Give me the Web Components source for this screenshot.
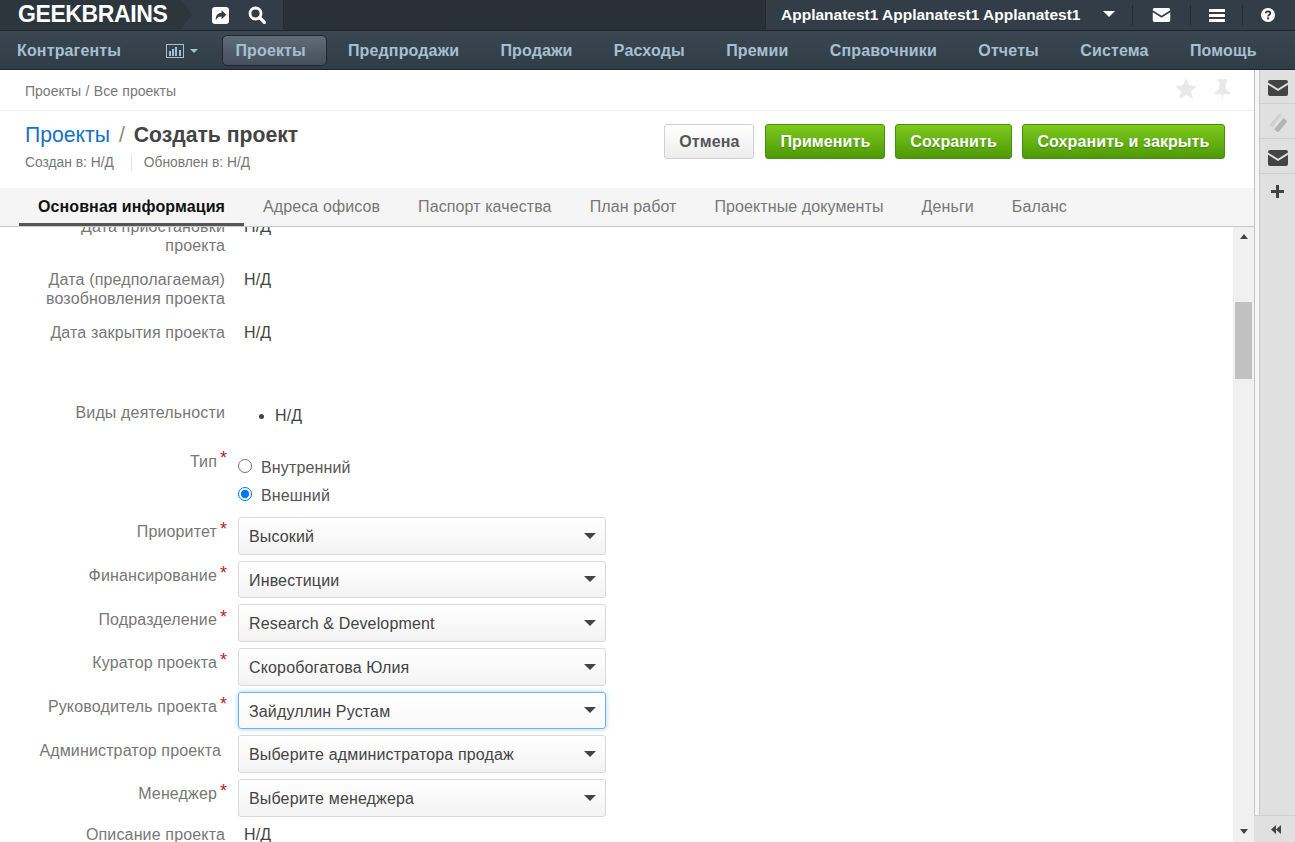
<!DOCTYPE html>
<html lang="ru">
<head>
<meta charset="utf-8">
<title>Создать проект</title>
<style>
  html, body { margin: 0; height: 100%; overflow: hidden; }
  body { font: 16px/20px "Liberation Sans", Arial, sans-serif; color: #444; background: #fff; }
  #app { display: flex; flex-direction: column; height: 842px; }
  #main { display: flex; flex: 1; min-height: 0; }
  #work { flex: 1; min-width: 0; display: flex; flex-direction: column; }
</style>
</head>
<body>
<div id="app">
  <gb-topbar></gb-topbar>
  <gb-navbar></gb-navbar>
  <div id="main">
    <div id="work">
      <gb-breadcrumbs></gb-breadcrumbs>
      <gb-titlebar></gb-titlebar>
      <gb-tabs></gb-tabs>
      <gb-scrollpane>
        <gb-field label="Дата приостановки проекта" style="margin-top:-12px;height:53px">Н/Д</gb-field>
        <gb-field label="Дата (предполагаемая) возобновления проекта" style="height:53px">Н/Д</gb-field>
        <gb-field label="Дата закрытия проекта" style="height:80px">Н/Д</gb-field>
        <gb-field label="Виды деятельности" list style="height:49px"><ul><li>Н/Д</li></ul></gb-field>
        <gb-field label="Тип" required radio style="height:66px">
          <gb-radio name="type" label="Внутренний"></gb-radio>
          <gb-radio name="type" label="Внешний" checked></gb-radio>
        </gb-field>
        <gb-field label="Приоритет" required select><gb-select value="Высокий"></gb-select></gb-field>
        <gb-field label="Финансирование" required select><gb-select value="Инвестиции"></gb-select></gb-field>
        <gb-field label="Подразделение" required select><gb-select value="Research &amp; Development"></gb-select></gb-field>
        <gb-field label="Куратор проекта" required select><gb-select value="Скоробогатова Юлия"></gb-select></gb-field>
        <gb-field label="Руководитель проекта" required select><gb-select value="Зайдуллин Рустам" focused></gb-select></gb-field>
        <gb-field label="Администратор проекта" optional select><gb-select value="Выберите администратора продаж"></gb-select></gb-field>
        <gb-field label="Менеджер" required select><gb-select value="Выберите менеджера"></gb-select></gb-field>
        <gb-field label="Описание проекта" style="padding-top:1px;height:40px">Н/Д</gb-field>
      </gb-scrollpane>
    </div>
    <gb-siderail></gb-siderail>
  </div>
</div>

<script>
const ICONS = {
  envelope: '<svg viewBox="0 0 20 16" width="W" height="H"><path fill="currentColor" d="M2 0h16a2 2 0 0 1 2 2v.6l-10 6.2L0 2.600V2a2 2 0 0 1 2-2zM0 4.800l10 6.200 10-6.200V14a2 2 0 0 1-2 2H2a2 2 0 0 1-2-2z"/></svg>',
  share: '<svg viewBox="0 0 16 16" width="17" height="17"><path fill="currentColor" fill-rule="evenodd" d="M3 0h10a3 3 0 0 1 3 3v10a3 3 0 0 1-3 3H3a3 3 0 0 1-3-3V3a3 3 0 0 1 3-3zM9 3v2.500C5.500 5.700 3.500 8 3.500 12.500 5 9.800 6.500 9 9 9v2.500L13.500 7.200z"/></svg>',
  search: '<svg viewBox="0 0 18 18" width="18" height="18"><circle cx="7.500" cy="7.500" r="5.500" fill="none" stroke="currentColor" stroke-width="2.800"/><path d="M11.500 11.500L16.500 16.500" stroke="currentColor" stroke-width="3.200" stroke-linecap="round"/></svg>',
  bars: '<svg viewBox="0 0 18 14" width="18" height="14"><path fill="currentColor" d="M0 0h18v14H0zM1 1v12h16V1z" fill-rule="evenodd"/><path fill="currentColor" d="M3 7h2v5H3zM6 5h2v7H6zM9 3h2v9H9zM13 6h2v6h-2z"/></svg>',
  hamburger: '<svg viewBox="0 0 16 13" width="16" height="13"><path fill="currentColor" d="M0 0h16v3H0zM0 5h16v3H0zM0 10h16v3H0z"/></svg>',
  help: '<svg viewBox="0 0 14 14" width="14" height="14"><circle cx="7" cy="7" r="7" fill="currentColor"/><path d="M4.700 5.300C4.800 4 5.800 3.300 7 3.300s2.300.8 2.300 1.900c0 1.600-2.200 1.700-2.200 3.200" fill="none" stroke="#2c343c" stroke-width="1.800"/><rect x="6.100" y="9.400" width="2" height="1.900" fill="#2c343c"/></svg>',
  star: '<svg viewBox="0 0 24 23" width="22" height="21"><path fill="currentColor" d="M12 0l3.500 8 8.500.8-6.400 5.700 1.900 8.500L12 18.500 4.500 23l1.900-8.500L0 8.800 8.500 8z"/></svg>',
  pin: '<svg viewBox="0 0 16 24" width="15" height="23" style="margin-top:1px"><path fill="currentColor" d="M3 0h10v2.500h-1.500V10L16 14v2H9l-1 8-1-8H0v-2l4.500-4V2.500H3z"/></svg>',
  stripes: '<svg viewBox="0 0 20 20" width="20" height="20"><path fill="#d0d0d0" d="M1.500 12.500L10.500 2a2 2 0 0 1 3 0l.5.500L4.500 15.500z"/><path fill="#b4b4b4" d="M6 17.500L15.500 6l3 2.500a1.500 1.500 0 0 1 0 2L11 19.500a1.500 1.500 0 0 1-2 0z"/></svg>',
  plus: '<svg viewBox="0 0 13 13" width="13" height="13"><path fill="currentColor" d="M5 0h3v5h5v3H8v5H5V8H0V5h5z"/></svg>',
  rewind: '<svg viewBox="0 0 10 9" width="10" height="9"><path fill="currentColor" d="M5 0v9L0 4.500zM10 0v9L5 4.500z"/></svg>'
};

function icon(name, w, h) {
  return ICONS[name].replace('"W"', '"' + w + '"').replace('"H"', '"' + h + '"');
}

class GbElement extends HTMLElement {
  connectedCallback() {
    if (this.shadowRoot) return;
    this.attachShadow({ mode: 'open' });
    this.render();
  }
}

class GbTopbar extends GbElement {
  render() {
    this.shadowRoot.innerHTML = `
      <style>
        :host { display: flex; height: 30px; background: #2a3038; border-bottom: 1px solid #1f252b; color: #fff; }
        .logo { width: 162px; padding-left: 18px; font: bold 23px/28px "Liberation Sans", sans-serif; letter-spacing: -.4px; background: #2d353d; white-space: nowrap; }
        .arrow { width: 0; height: 0; border-left: 12px solid #2d353d; border-top: 15px solid transparent; border-bottom: 15px solid transparent; background: #323d47; }
        .tools { display: flex; align-items: center; gap: 19px; width: 92px; background: #323d47; border-right: 1px solid #252b31; box-sizing: border-box; padding-left: 20px; }
        .tools svg { display: block; }
        .spacer { flex: 1; }
        .user { display: flex; align-items: center; height: 30px; width: 530px; background: #323d47; border-left: 1px solid #252b31; box-sizing: border-box; padding-left: 15px; }
        .name { font: bold 15.500px/20px "Liberation Sans", sans-serif; width: 322px; white-space: nowrap; }
        .caret { width: 0; height: 0; border: 6px solid transparent; border-top-color: #fff; border-bottom: 0; margin-top: -2px; }
        .sep { width: 1px; height: 20px; background: #232a30; }
        .cell { display: flex; align-items: center; justify-content: center; box-sizing: border-box; }
      </style>
      <div class="logo">GEEKBRAINS</div>
      <div class="arrow"></div>
      <div class="tools">${icon('share')}${icon('search')}</div>
      <div class="spacer"></div>
      <div class="user">
        <div class="name">Applanatest1 Applanatest1 Applanatest1</div>
        <div class="caret"></div>
        <div class="sep" style="margin-left:17px"></div>
        <div class="cell" style="width:57px">${icon('envelope', 19, 14)}</div>
        <div class="sep"></div>
        <div class="cell" style="width:51px">${icon('hamburger')}</div>
        <div class="sep"></div>
        <div class="cell" style="width:37px;padding-left:13px">${icon('help')}</div>
      </div>`;
  }
}

class GbNavbar extends GbElement {
  render() {
    const items = ['Предпродажи', 'Продажи', 'Расходы', 'Премии', 'Справочники', 'Отчеты', 'Система', 'Помощь'];
    this.shadowRoot.innerHTML = `
      <style>
        :host { display: flex; align-items: center; height: 39px; box-sizing: border-box; padding: 2px 0 0 17px; background: linear-gradient(#3a4752, #303c46); border-bottom: 1px solid #1f272d; color: #a6c0d2; font: bold 16px/20px "Liberation Sans", sans-serif; letter-spacing: .15px; }
        .item { margin-right: 41.300px; white-space: nowrap; }
        .chart { display: flex; align-items: center; gap: 6px; margin-left: 4px; margin-right: 24px; }
        .caret { width: 0; height: 0; border: 4px solid transparent; border-top-color: #a6c0d2; border-bottom: 0; }
        .active { margin: -2px 21px 0 0; padding: 0 20px 0 12px; height: 31px; line-height: 29px; border-radius: 5px; border: 1px solid #20282e; box-sizing: border-box; background: linear-gradient(#5f6c78, #454f5b); }
      </style>
      <div class="item">Контрагенты</div>
      <div class="item chart">${icon('bars')}<span class="caret"></span></div>
      <div class="item active">Проекты</div>
      ${items.map(t => `<div class="item">${t}</div>`).join('')}`;
  }
}

class GbBreadcrumbs extends GbElement {
  render() {
    this.shadowRoot.innerHTML = `
      <style>
        :host { display: flex; align-items: center; height: 41px; box-sizing: border-box; padding: 0 24px 0 25px; border-bottom: 1px solid #eee; color: #777; font: 14px/20px "Liberation Sans", sans-serif; }
        .crumbs { flex: 1; padding-top: 2px; word-spacing: .5px; }
        .tools { display: flex; align-items: flex-start; gap: 18px; height: 24px; color: #e9e9e9; }
        svg { display: block; }
      </style>
      <div class="crumbs">Проекты / Все проекты</div>
      <div class="tools">${icon('star')}${icon('pin')}</div>`;
  }
}

class GbTitlebar extends GbElement {
  render() {
    this.shadowRoot.innerHTML = `
      <style>
        :host { display: flex; height: 77px; box-sizing: border-box; padding: 12px 29px 0 25px; font-family: "Liberation Sans", sans-serif; }
        .heading { flex: 1; }
        h1 { margin: 0; font: normal 21.200px/24px "Liberation Sans", sans-serif; color: #888; }
        a { color: #1671c4; text-decoration: none; }
        b { color: #444; }
        .slash { margin: 0 3px; }
        .meta { display: flex; margin-top: 7px; font-size: 13.800px; line-height: 17px; color: #777; }
        .meta span + span { margin-left: 17px; padding-left: 12px; border-left: 1px solid #e5e5e5; }
        .actions { display: flex; gap: 10px; padding-top: 1px; }
      </style>
      <div class="heading">
        <h1><a>Проекты</a> <span class="slash">/</span> <b>Создать проект</b></h1>
        <div class="meta"><span>Создан в: Н/Д</span><span>Обновлен в: Н/Д</span></div>
      </div>
      <div class="actions">
        <gb-button style="margin-right:1px">Отмена</gb-button>
        <gb-button primary>Применить</gb-button>
        <gb-button primary>Сохранить</gb-button>
        <gb-button primary style="--pad:14.500px">Сохранить и закрыть</gb-button>
      </div>`;
  }
}

class GbButton extends GbElement {
  render() {
    this.shadowRoot.innerHTML = `
      <style>
        :host { display: block; }
        button { display: block; height: 35px; padding: 0 var(--pad, 14px); border: 1px solid #d0d0d0; border-radius: 3px; background: linear-gradient(#fff, #ededed); color: #555; font: bold 16px/20px "Liberation Sans", sans-serif; letter-spacing: .1px; white-space: nowrap; }
        :host([primary]) button { border-color: #478f0c; background: linear-gradient(#7dc91d, #4d9a07); color: #fff; text-shadow: 0 1px 1px rgba(0,0,0,.25); }
      </style>
      <button><slot></slot></button>`;
  }
}

class GbTabs extends GbElement {
  render() {
    const tabs = ['Основная информация', 'Адреса офисов', 'Паспорт качества', 'План работ', 'Проектные документы', 'Деньги', 'Баланс'];
    this.shadowRoot.innerHTML = `
      <style>
        :host { display: flex; height: 39px; box-sizing: border-box; padding-left: 19px; background: #f5f5f5; border-bottom: 1px solid #c8c8c8; font: 16px/20px "Liberation Sans", sans-serif; letter-spacing: .1px; color: #777; }
        .tab { padding: 9px 19px 0; height: 38px; box-sizing: border-box; white-space: nowrap; }
        .on { font-weight: bold; color: #111; border-bottom: 3px solid #555; }
      </style>
      ${tabs.map((t, i) => `<div class="tab${i ? '' : ' on'}">${t}</div>`).join('')}`;
  }
}

class GbScrollpane extends GbElement {
  render() {
    this.shadowRoot.innerHTML = `
      <style>
        :host { display: flex; flex: 1; min-height: 0; overflow: hidden; }
        .content { flex: 1; min-width: 0; overflow: hidden; padding-top: 1px; }
        .bar { display: flex; flex-direction: column; align-items: center; width: 21px; background: #f0f0f0; }
        .up, .down { width: 0; height: 0; border: 4.500px solid transparent; flex: none; }
        .up { margin-top: 7px; border-bottom: 5px solid #444; border-top: 0; }
        .down { margin-bottom: 8px; border-top: 5px solid #444; border-bottom: 0; }
        .thumb { width: 17px; height: 77px; margin-top: 63px; background: #c1c1c1; }
        .track { flex: 1; }
      </style>
      <div class="content"><slot></slot></div>
      <div class="bar"><div class="up"></div><div class="thumb"></div><div class="track"></div><div class="down"></div></div>`;
  }
}

class GbField extends GbElement {
  render() {
    const label = this.getAttribute('label');
    const mark = this.hasAttribute('required') ? '<i>*</i>' : '';
    this.shadowRoot.innerHTML = `
      <style>
        :host { display: grid; grid-template-columns: 225px 1fr; font: 16px/20px "Liberation Sans", sans-serif; letter-spacing: .15px; color: #444; }
        .label { text-align: right; color: #777; padding: 1px 0 0 30px; line-height: 19px; box-sizing: border-box; }
        .value { padding: 1px 0 0 19px; }
        i { font-style: normal; color: #c0182c; position: absolute; margin-top: -3px; margin-left: 3px; font-size: 18px; }
        :host([required]) .label { padding-right: 8px; }
        :host([optional]) .label { padding-right: 4px; }
        :host([select]) { height: 43.670px; }
        :host([select]) .label { padding-top: 5.400px; line-height: 20px; }
        :host([select]) .value { padding: 0 0 0 13px; }
        :host([radio]) .value { padding: 2px 0 0 13px; }
        :host([list]) .value { padding-top: 4px; }
        ::slotted(ul) { margin: 0; padding: 0 0 0 31px; }
      </style>
      <div class="label">${label}${mark}</div>
      <div class="value"><slot></slot></div>`;
  }
}

class GbRadio extends GbElement {
  render() {
    this.shadowRoot.innerHTML = `
      <style>
        :host { display: flex; align-items: center; height: 28px; font: 16px/20px "Liberation Sans", sans-serif; letter-spacing: .15px; color: #555; }
        input { margin: -2px 9px 0 0; width: 14px; height: 14px; }
        span { padding-top: 2px; }
      </style>
      <input type="radio" name="${this.getAttribute('name')}" ${this.hasAttribute('checked') ? 'checked' : ''}>
      <span>${this.getAttribute('label')}</span>`;
  }
}

class GbSelect extends GbElement {
  render() {
    this.shadowRoot.innerHTML = `
      <style>
        :host { display: flex; align-items: center; width: 368px; height: 37.670px; box-sizing: border-box; padding: 0 10px; border: 1px solid #d9d9d9; border-radius: 3px; background: linear-gradient(#fff, #f3f3f3); font: 16px/20px "Liberation Sans", sans-serif; letter-spacing: .15px; color: #444; }
        :host([focused]) { border-color: #6db5f0; background: linear-gradient(#fff, #f9f9f9); box-shadow: 0 0 5px rgba(82,168,236,.55); }
        .text { flex: 1; padding-top: 2.700px; white-space: nowrap; }
        .caret { width: 0; height: 0; border: 6px solid transparent; border-top: 6px solid #444; border-bottom: 0; margin-right: -1px; }
      </style>
      <div class="text">${this.getAttribute('value').replace('&', '&amp;')}</div>
      <div class="caret"></div>`;
  }
}

class GbSiderail extends GbElement {
  render() {
    this.shadowRoot.innerHTML = `
      <style>
        :host { display: flex; flex-direction: column; width: 41px; color: #444; background: #e0e0e0; }
        .body { flex: 1; display: flex; flex-direction: column; border-left: 1px solid #c4c4c4; background: #f5f5f5; padding-left: 4px; min-height: 0; }
        .cells { flex: 1; display: flex; flex-direction: column; border-left: 1px solid #c8c8c8; background: #e0e0e0; }
        .cell { display: flex; align-items: center; justify-content: center; box-sizing: border-box; height: 35px; border-bottom: 1px solid #cfcfcf; }
        .first { height: 34px; padding-top: 3px; }
        .low { padding-top: 3px; }
        .nudge { padding-top: 1px; }
        .plain { border-bottom: 0; }
        .foot { display: flex; align-items: center; justify-content: center; box-sizing: border-box; height: 27px; border-top: 1px solid #cfcfcf; padding-left: 3px; }
        svg { display: block; }
      </style>
      <div class="body"><div class="cells">
        <div class="cell first">${icon('envelope', 20, 16)}</div>
        <div class="cell nudge">${icon('stripes')}</div>
        <div class="cell low">${icon('envelope', 20, 16)}</div>
        <div class="cell plain">${icon('plus')}</div>
      </div></div>
      <div class="foot">${icon('rewind')}</div>`;
  }
}

const ELEMENTS = {
  'gb-topbar': GbTopbar, 'gb-navbar': GbNavbar, 'gb-breadcrumbs': GbBreadcrumbs, 'gb-titlebar': GbTitlebar,
  'gb-button': GbButton, 'gb-tabs': GbTabs, 'gb-scrollpane': GbScrollpane, 'gb-field': GbField,
  'gb-radio': GbRadio, 'gb-select': GbSelect, 'gb-siderail': GbSiderail
};
Object.keys(ELEMENTS).forEach(tag => customElements.define(tag, ELEMENTS[tag]));
</script>
</body>
</html>
